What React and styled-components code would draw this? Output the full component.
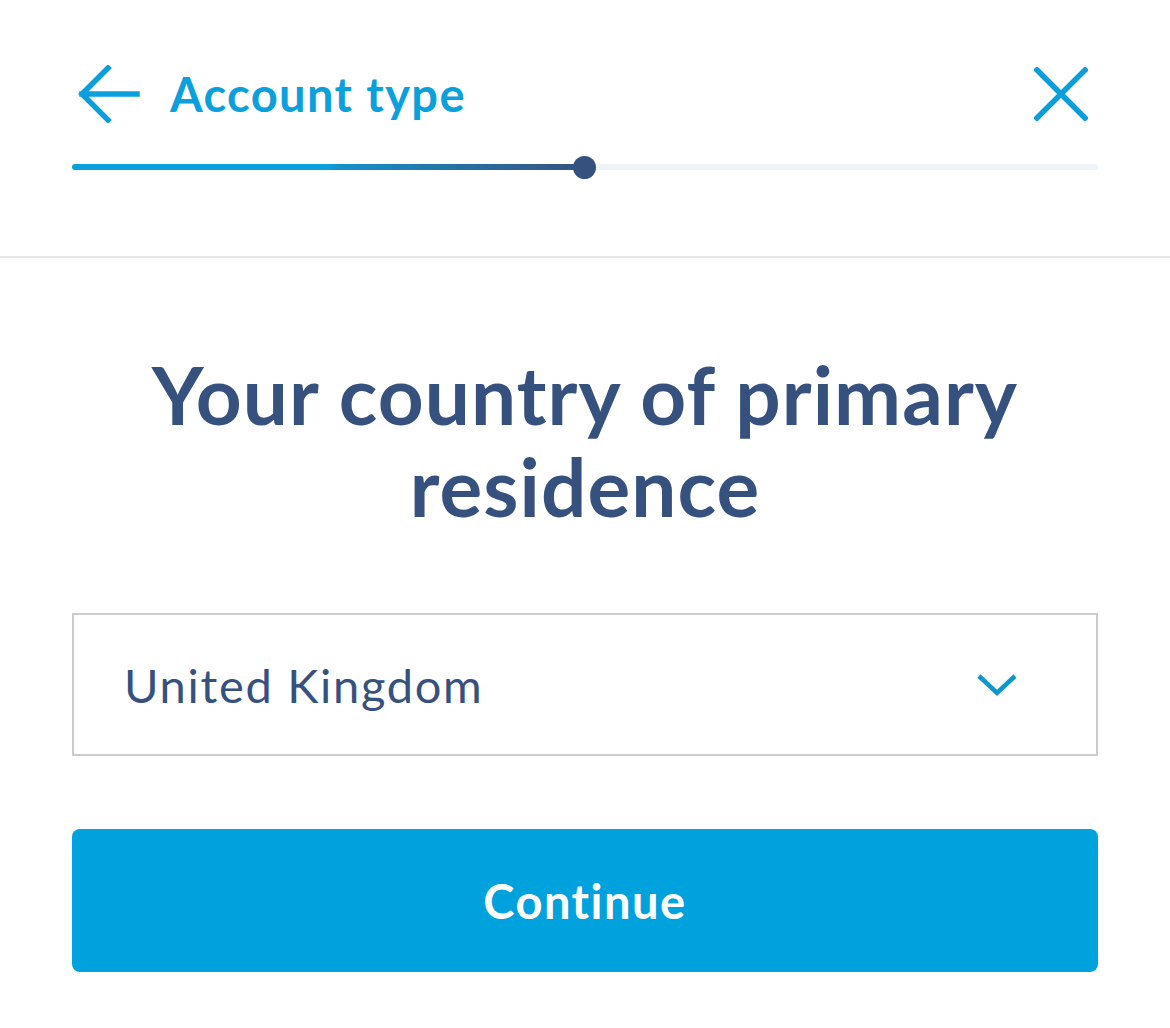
import React from 'react';
import styled, { createGlobalStyle } from 'styled-components';

const GlobalStyle = createGlobalStyle`
  html, body {
    margin: 0;
    padding: 0;
    background: #ffffff;
  }
  body {
    font-family: Lato, 'Open Sans', sans-serif;
  }
`;

const App = () => {
  const progress = 50;
  return (
    <Root>
      <GlobalStyle />
      <Header>
        <TopRow>
          <BackLink>
            <svg width="62" height="58" viewBox="0 0 62 58" fill="none">
              <path
                d="M59 29H4M30 3L4 29L30 55"
                stroke="#0a9fdb"
                strokeWidth="5.5"
                strokeLinecap="square"
              />
            </svg>
            <Title>Account type</Title>
          </BackLink>
          <CloseButton>
            <svg width="54" height="54" viewBox="0 0 54 54" fill="none">
              <path
                d="M3 3L51 51M51 3L3 51"
                stroke="#0a9fdb"
                strokeWidth="5.5"
                strokeLinecap="square"
              />
            </svg>
          </CloseButton>
        </TopRow>
        <Track>
          <Fill style={{ width: `${progress}%` }}>
            <Knob />
          </Fill>
        </Track>
      </Header>
      <Main>
        <Heading>
          Your country of primary
          <br />
          residence
        </Heading>
        <Select>
          <SelectValue>United Kingdom</SelectValue>
          <svg width="42" height="24" viewBox="0 0 42 24" fill="none">
            <path d="M3 3L21 20L39 3" stroke="#0a97cb" strokeWidth="4.5" />
          </svg>
        </Select>
        <Button>Continue</Button>
      </Main>
    </Root>
  );
};

export default App;

const Root = styled.div`
  width: 1170px;
  min-height: 1028px;
  background: #fff;
`;

const Header = styled.header`
  padding: 66px 72px 86px;
  border-bottom: 2px solid #e6e6e6;
`;

const TopRow = styled.div`
  display: flex;
  align-items: center;
  justify-content: space-between;
  height: 56px;
`;

const BackLink = styled.div`
  display: flex;
  align-items: center;
  gap: 30px;
  padding-left: 6px;
`;

const Title = styled.span`
  font-size: 47px;
  font-weight: 700;
  color: #0aa0dc;
  letter-spacing: 1.4px;
`;

const CloseButton = styled.div`
  display: flex;
  margin-right: 10px;
`;

const Track = styled.div`
  margin-top: 42px;
  height: 6px;
  border-radius: 3px;
  background: #f0f4f7;
`;

const Fill = styled.div`
  position: relative;
  height: 100%;
  border-radius: 3px;
  background: linear-gradient(
    to right,
    #0aa0dc 0%,
    #0aa0dc 50%,
    #1590ca 52%,
    #37517e 100%
  );
`;

const Knob = styled.span`
  position: absolute;
  right: -11px;
  top: 50%;
  width: 23px;
  height: 23px;
  margin-top: -11.5px;
  border-radius: 50%;
  background: #37517e;
`;

const Main = styled.main`
  display: flex;
  flex-direction: column;
  padding: 90px 72px 0;
`;

const Heading = styled.h1`
  margin: 0 0 81px;
  font-size: 80px;
  line-height: 92px;
  font-weight: 700;
  color: #37517e;
  text-align: center;
  letter-spacing: 1.1px;
`;

const Select = styled.div`
  display: flex;
  align-items: center;
  justify-content: space-between;
  height: 143px;
  box-sizing: border-box;
  border: 2px solid #cccccc;
  padding: 0 78px 0 50px;
`;

const SelectValue = styled.span`
  font-size: 47px;
  font-weight: 400;
  color: #37517e;
  letter-spacing: 1.7px;
`;

const Button = styled.button`
  margin-top: 73px;
  height: 143px;
  border: 0;
  border-radius: 8px;
  background: #00a2dd;
  color: #fff;
  font-family: Lato, 'Open Sans', sans-serif;
  font-size: 47px;
  font-weight: 700;
  letter-spacing: 1.5px;
  cursor: pointer;
`;
